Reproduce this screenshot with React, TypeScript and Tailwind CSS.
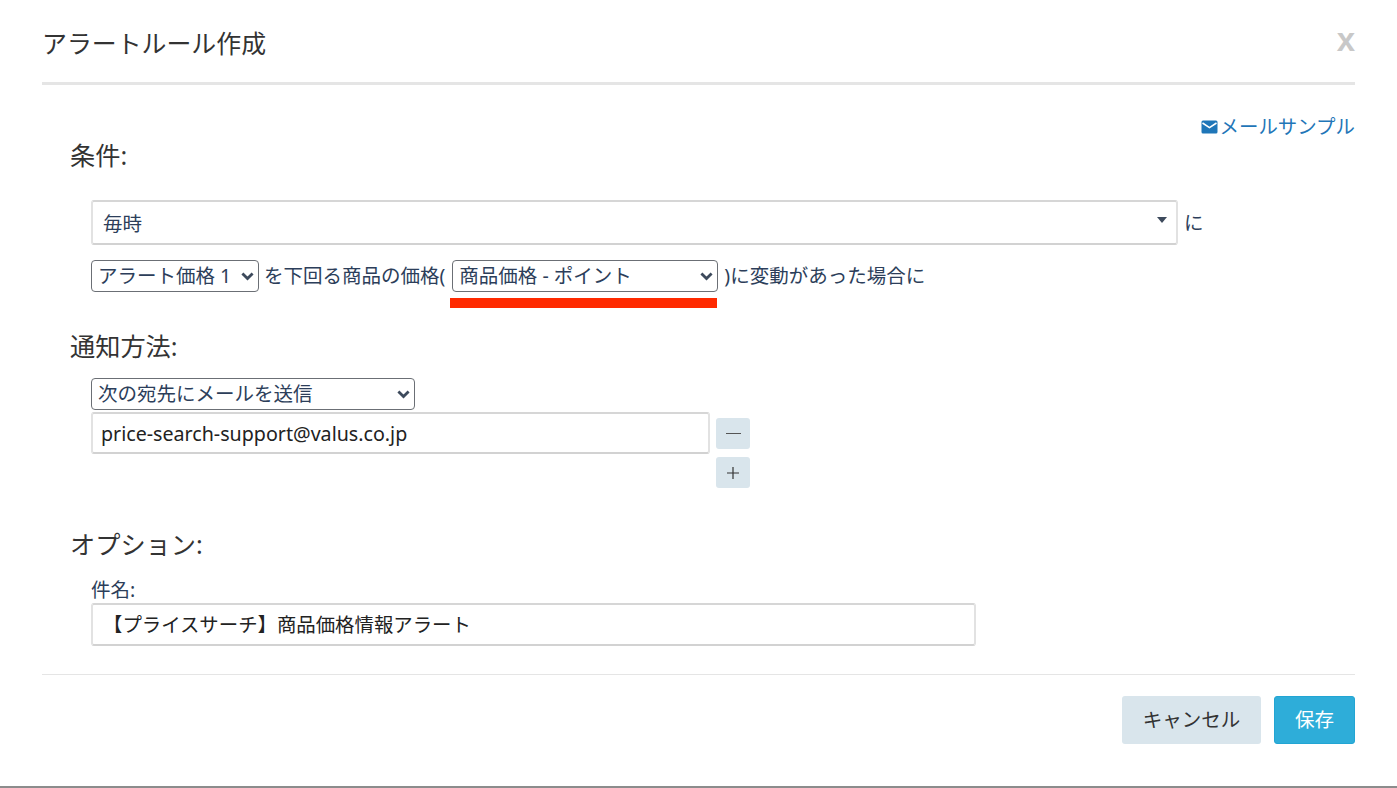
import React from "react";

const FONT = 'font-["Noto_Sans","Noto_Sans_CJK_JP",sans-serif]';
const FIELD = "rounded-[3px] border-[2px] border-x-[#e2e2e2] border-t-[#d6d6d6] border-b-[#d2d2d2] bg-white outline-none";

function Chevron() {
  return (
    <svg className="pointer-events-none absolute right-[5px] top-1/2 -mt-[4px]" width="13" height="9" viewBox="0 0 13 9" fill="none">
      <path d="M1.4 1.6 L6.5 6.6 L11.6 1.6" stroke="#3d4a5c" strokeWidth="2.8" />
    </svg>
  );
}

function NativeSelect({ value, className }: { value: string; className: string }) {
  return (
    <div className={`relative ${className}`}>
      <select
        defaultValue={value}
        className="block h-full w-full appearance-none rounded-[4px] border border-[#6b6f75] bg-white pl-[6px] text-[19.5px] leading-none text-[#2c3e5a] outline-none"
      >
        <option>{value}</option>
      </select>
      <Chevron />
    </div>
  );
}

function SmallButton({ label }: { label: React.ReactNode }) {
  return (
    <button className="flex h-[31px] w-[34px] items-center justify-center rounded-[3px] bg-[#d9e5ec]">{label}</button>
  );
}

export default function App() {
  return (
    <div className={`${FONT} flex h-[788px] w-full flex-col overflow-hidden border-b-[2px] border-[#8c8c8c] bg-white px-[42px] text-[#2c3e5a]`}>
      <header className="flex h-[85px] shrink-0 items-start justify-between border-b-[3px] border-[#e5e5e5] pt-[25px]">
        <h1 className="text-[24.9px] leading-[37px] text-[#333333]">アラートルール作成</h1>
        <span className="font-['Liberation_Sans',sans-serif] text-[33px] font-bold leading-[30px] text-[#c8c8c8]">x</span>
      </header>

      <main className="relative flex-1">
        <a className="absolute right-0 top-[29px] flex items-center text-[19.45px] leading-[26px] text-[#1f76b8]">
          <svg width="17" height="14" viewBox="0 0 17 14" className="mr-[2px]">
            <rect x="0.5" y="0.5" width="16" height="13" rx="1.5" fill="#1f76b8" />
            <path d="M1.5 3 L8.5 7.6 L15.5 3" fill="none" stroke="#ffffff" strokeWidth="1.6" />
          </svg>
          メールサンプル
        </a>

        <section className="pl-[28px] pt-[52px]">
          <h2 className="text-[25.2px] leading-[36px] text-[#333333]">条件:</h2>
          <div className="ml-[21px] mt-[27px] flex items-center">
            <div className={`relative flex h-[45px] w-[1087px] items-center pl-[10px] pt-[2px] text-[19.5px] ${FIELD}`}>
              毎時
              <span className="absolute right-[9px] top-[15px] h-0 w-0 border-x-[5px] border-t-[6px] border-x-transparent border-t-[#3d4a5c]" />
            </div>
            <span className="ml-[6px] text-[19.5px]">に</span>
          </div>
          <div className="relative ml-[21px] mt-[15px] flex h-[32px] items-center text-[19.5px]">
            <NativeSelect value="アラート価格 1" className="h-[32px] w-[168px]" />
            <span className="ml-[5px]">を下回る商品の価格(</span>
            <NativeSelect value="商品価格 - ポイント" className="ml-[7px] h-[32px] w-[266px]" />
            <span className="ml-[6px]">)に変動があった場合に</span>
            <span className="absolute left-[359px] top-[38px] h-[10px] w-[267px] bg-[#ff2a00]" />
          </div>
        </section>

        <section className="pl-[28px] pt-[36px]">
          <h2 className="text-[25.2px] leading-[36px] text-[#333333]">通知方法:</h2>
          <div className="ml-[21px] mt-[14px]">
            <NativeSelect value="次の宛先にメールを送信" className="h-[32px] w-[324px]" />
            <div className="mt-[2px] flex items-start">
              <input
                readOnly
                value="price-search-support@valus.co.jp"
                className={`h-[42px] w-[619px] pl-[8px] text-[19.65px] text-[#222222] ${FIELD}`}
              />
              <div className="ml-[6px] mt-[6px] flex flex-col gap-[8px]">
                <SmallButton label={<span className="h-[1.5px] w-[15px] bg-[#555555]" />} />
                <SmallButton
                  label={
                    <svg width="12" height="12" viewBox="0 0 12 12">
                      <path d="M6 0 V12 M0 6 H12" stroke="#333333" strokeWidth="1.2" />
                    </svg>
                  }
                />
              </div>
            </div>
          </div>
        </section>

        <section className="pl-[28px] pt-[38px]">
          <h2 className="text-[25.2px] leading-[36px] text-[#333333]">オプション:</h2>
          <label className="ml-[21px] mt-[15px] block text-[19.5px] leading-[26px]">件名:</label>
          <input
            readOnly
            value="【プライスサーチ】商品価格情報アラート"
            className={`ml-[21px] block h-[43px] w-[885px] pb-[2px] pl-[10px] text-[19.4px] text-[#222222] ${FIELD}`}
          />
        </section>
      </main>

      <footer className="flex h-[112px] shrink-0 items-start justify-end gap-[13px] border-t border-[#e5e5e5] pt-[21px]">
        <button className="h-[48px] w-[139px] rounded-[3px] bg-[#d9e5ec] text-[19.5px] text-[#333333]">キャンセル</button>
        <button className="h-[48px] w-[81px] rounded-[3px] border border-[#22a5d3] bg-[#2eadd9] text-[19.5px] text-white">保存</button>
      </footer>
    </div>
  );
}
